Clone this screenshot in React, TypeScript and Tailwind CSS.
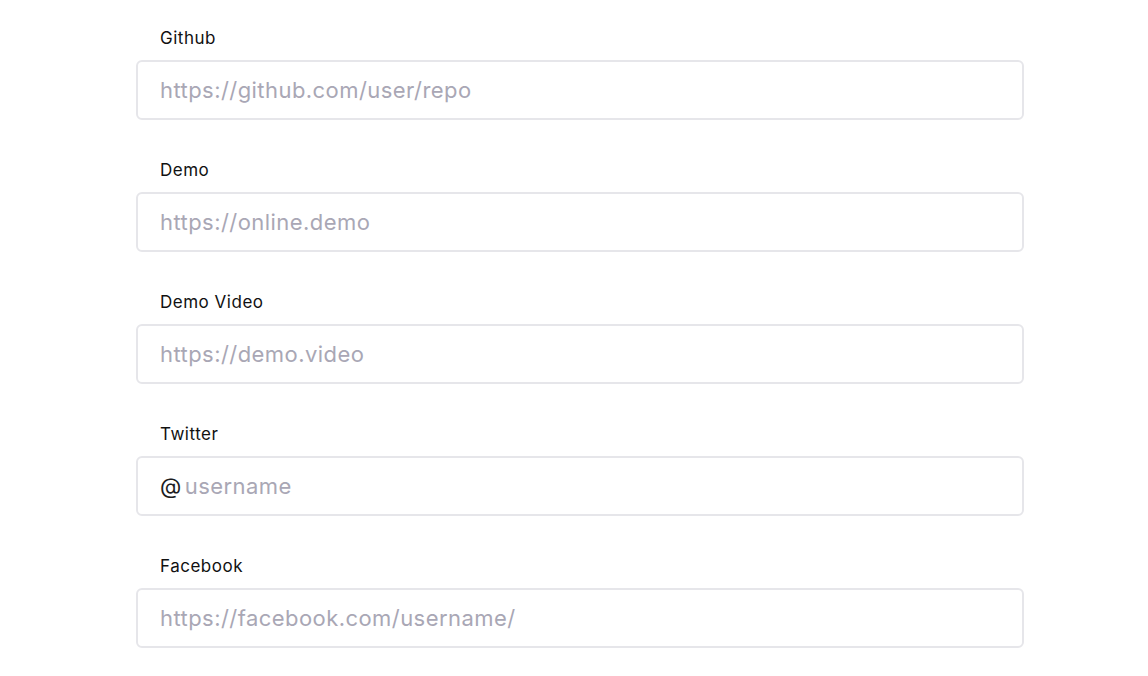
const fields = [
    { label: "Github", placeholder: "https://github.com/user/repo" },
    { label: "Demo", placeholder: "https://online.demo" },
    { label: "Demo Video", placeholder: "https://demo.video" },
    { label: "Twitter", placeholder: "username", prefix: "@" },
    { label: "Facebook", placeholder: "https://facebook.com/username/" },
]

export default function App() {
    return (
        <div className="min-h-screen bg-white font-['Inter',sans-serif] pl-[136px] pt-[26px]">
            <div className="flex flex-col gap-[38px] w-[888px]">
                {fields.map((f) => <Field key={f.label} {...f} />)}
            </div>
        </div>
    )
}

function Field({ label, placeholder, prefix }: { label: string, placeholder: string, prefix?: string }) {
    return (
        <div className="flex flex-col gap-[10px]">
            <label className="pl-6 text-[17px] leading-6 tracking-[0.03em] text-[#111]">{label}</label>
            <div className="flex items-center h-[60px] rounded-md border-2 border-[#e6e6ea] px-[22px] text-[22px] tracking-[0.02em]">
                {prefix && <span className="text-[#1c1c1e] mr-[3px]">{prefix}</span>}
                <input
                    className="flex-1 outline-none bg-transparent placeholder:text-[#a9a7b5] text-[#1c1c1e] tracking-[0.02em]"
                    placeholder={placeholder}
                />
            </div>
        </div>
    )
}
